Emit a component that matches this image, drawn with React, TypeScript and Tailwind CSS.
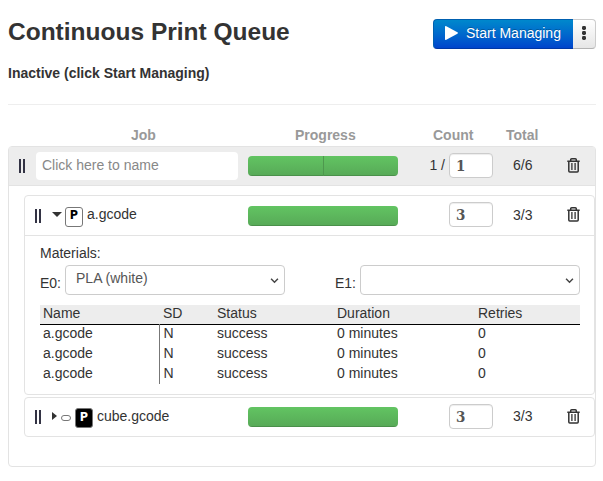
import React from "react";

function Handle() {
  return (
    <div className="flex h-[14px] w-[6px] shrink-0 justify-between">
      <span className="w-[2px] bg-[#333344]" />
      <span className="w-[2px] bg-[#333344]" />
    </div>
  );
}

function Trash() {
  return (
    <svg className="mb-[2px] block h-[15px] w-[13px] shrink-0" viewBox="0 0 13 15" fill="none" stroke="#333" strokeWidth="1.5">
      <path d="M.3 3.2H12.7M3.7 3V1.8Q3.7.8 4.7.8H8.3Q9.3.8 9.3 1.8V3M1.8 3.2V13Q1.8 14 2.8 14H10.2Q11.2 14 11.2 13V3.2" />
      <path d="M4.9 5V12M8.1 5V12" strokeWidth="1.3" />
    </svg>
  );
}

function Bar({ split = false }: { split?: boolean }) {
  return (
    <div className="flex h-5 w-[150px] shrink-0 overflow-hidden rounded-[4px]">
      <div className="flex-1 bg-gradient-to-b from-[#62c462] to-[#57a957] shadow-[inset_0_-1px_0_rgba(0,0,0,0.15)]" />
      {split && (
        <div className="w-[75px] border-l border-[#4e984e] bg-gradient-to-b from-[#62c462] to-[#57a957] shadow-[inset_0_-1px_0_rgba(0,0,0,0.15)]" />
      )}
    </div>
  );
}

function Stats({ prefix, count, total, split }: { prefix?: string; count: string; total: string; split?: boolean }) {
  return (
    <>
      <Bar split={split} />
      <div className="mb-[2px] w-[51px] pr-[4px] text-right">{prefix}</div>
      <div className="mb-[2px] h-[25px] w-[44px] shrink-0 rounded-[4px] border border-[#ccc] bg-white pl-[6px] font-['DejaVu_Serif_Condensed','DejaVu_Serif',serif] text-[15px] leading-[24px] font-bold text-[#555] shadow-[inset_0_1px_1px_rgba(0,0,0,0.075)]">
        {count}
      </div>
      <div className="mb-[2px] ml-5 w-[54px] shrink-0">{total}</div>
      <Trash />
    </>
  );
}

function Badge({ dark = false }: { dark?: boolean }) {
  return (
    <span
      className={
        dark
          ? "mt-px h-5 w-[18px] shrink-0 rounded-[3px] border border-[#777] bg-black text-center font-['DejaVu_Sans_Condensed','DejaVu_Sans',sans-serif] text-[12.5px] leading-[15px] font-bold text-white"
          : "mt-[3px] h-5 w-[18px] shrink-0 rounded-[3px] border border-[#777] bg-white text-center font-['DejaVu_Sans_Condensed','DejaVu_Sans',sans-serif] text-[12.5px] leading-[13px] font-bold text-black"
      }
    >
      P
    </span>
  );
}

function Select({ label, value }: { label: string; value: string }) {
  return (
    <div className="flex w-[245px] justify-end">
      <span className="mt-2 mr-1">{label}</span>
      <div className="flex h-[30px] w-[220px] justify-between rounded-[4px] border border-[#ccc] bg-white pl-[10px] text-[#555]">
        <span className="mt-[2px]">{value}</span>
        <svg className="mt-3 mr-[5px] h-[6px] w-[9px]" viewBox="0 0 10 7" fill="none" stroke="#444" strokeWidth="1.7">
          <path d="M1 1L5 5L9 1" />
        </svg>
      </div>
    </div>
  );
}

export default function App() {
  return (
    <div className="h-[481px] w-[603px] bg-white pt-[17px] pl-2 font-['Liberation_Sans',Arial,sans-serif] text-[14px] leading-5 text-[#333]">
      <div className="flex h-[46px] w-[588px] items-start justify-between">
        <h1 className="text-[24.5px] leading-[30px] font-bold">Continuous Print Queue</h1>
        <div className="mt-[2px] flex h-[30px] w-[163px]">
          <button className="flex w-[140px] items-center rounded-l-[4px] border border-r-0 border-[#0060b0] border-b-[#0037a4] bg-gradient-to-b from-[#0088cc] to-[#0044cc] pb-[2px] pl-[11px] text-white [text-shadow:0_-1px_0_rgba(0,0,0,0.25)]">
            <svg className="mr-2 h-[14px] w-[13px]" viewBox="0 0 13 14" fill="white">
              <path d="M0 1Q0-.4 1.3.3L12.4 6.3Q13.5 7 12.4 7.7L1.3 13.7Q0 14.4 0 13Z" />
            </svg>
            Start Managing
          </button>
          <button className="flex w-[23px] items-center justify-center rounded-r-[4px] border border-l-0 border-[#ccc] border-b-[#b3b3b3] bg-gradient-to-b from-white to-[#e6e6e6] pb-[2px]">
            <svg className="h-[14px] w-[4px]" viewBox="0 0 4 14" fill="#333">
              <rect y="0" width="4" height="4" rx="1.4" />
              <rect y="5" width="4" height="4" rx="1.4" />
              <rect y="10" width="4" height="4" rx="1.4" />
            </svg>
          </button>
        </div>
      </div>
      <div className="h-[42px] w-[588px] border-b border-[#eee] font-bold">Inactive (click Start Managing)</div>
      <div className="flex h-[41px] pt-5 font-bold text-[#999]">
        <span className="ml-[123px] w-[164px]">Job</span>
        <span className="w-[138px]">Progress</span>
        <span className="w-[73px]">Count</span>
        <span>Total</span>
      </div>
      <main className="h-[321px] w-[588px] rounded-[4px] border border-[#e3e3e3]">
        <div className="flex h-[39px] items-center border-b border-[#e3e3e3] bg-[#ededed] pl-[10.4px]">
          <Handle />
          <div className="mr-[10px] ml-[10.6px] h-7 w-[202px] rounded-[4px] bg-white pl-[6px] leading-[26px] text-[#888]">
            Click here to name
          </div>
          <Stats prefix="1 /" count="1" total="6/6" split />
        </div>
        <section className="mt-[9px] ml-[15px] h-[200px] rounded-[4px] border border-[#e3e3e3]">
          <div className="flex h-10 items-center border-b border-[#e3e3e3] pl-[10.4px]">
            <Handle />
            <div className="ml-[10.6px] flex w-[196px] items-center">
              <span className="mr-[3px] mb-[2px] h-0 w-0 border-x-[5px] border-t-[5px] border-x-transparent border-t-[#333]" />
              <Badge />
              <span className="mb-[3px] ml-[4px]">a.gcode</span>
            </div>
            <Stats count="3" total="3/3" />
          </div>
          <div className="w-[555px] pt-[7px] pl-[15px]">
            <div>Materials:</div>
            <div className="mt-[2px] flex gap-[50px]">
              <Select label="E0:" value="PLA (white)" />
              <Select label="E1:" value="" />
            </div>
            <table className="mt-[10px] w-[540px] table-fixed border-collapse text-left">
              <colgroup>
                <col className="w-[119px]" />
                <col className="w-[55px]" />
                <col className="w-[120px]" />
                <col className="w-[141px]" />
                <col />
              </colgroup>
              <thead className="border-b border-black bg-[#ededed]">
                <tr className="h-[19px] leading-[16px]">
                  {["Name", "SD", "Status", "Duration", "Retries"].map((name) => (
                    <th key={name} className="p-0 pb-[2px] pl-[3px] font-normal nth-2:pl-[4px]">{name}</th>
                  ))}
                </tr>
              </thead>
              <tbody>
                {[0, 1, 2].map((run) => (
                  <tr key={run} className="h-5 leading-[16px]">
                    <td className="border-r border-[#777] p-0 pb-[2px] pl-[3px]">a.gcode</td>
                    <td className="p-0 pb-[2px] pl-[4px]">N</td>
                    <td className="p-0 pb-[2px] pl-[3px]">success</td>
                    <td className="p-0 pb-[2px] pl-[3px]">0 minutes</td>
                    <td className="p-0 pb-[2px] pl-[3px]">0</td>
                  </tr>
                ))}
              </tbody>
            </table>
          </div>
        </section>
        <section className="mt-[2px] ml-[15px] flex h-10 items-center rounded-[4px] border border-[#e3e3e3] pl-[10.4px]">
          <Handle />
          <div className="ml-[10.6px] flex w-[196px] items-center">
            <span className="mr-[4px] mb-[3px] h-0 w-0 border-y-[4.5px] border-l-[5px] border-y-transparent border-l-[#333]" />
            <span className="mt-[2px] mr-[4px] h-[6px] w-[10px] rounded-full border border-[#777]" />
            <Badge dark />
            <span className="mb-[2px] ml-[4px]">cube.gcode</span>
          </div>
          <Stats count="3" total="3/3" />
        </section>
      </main>
    </div>
  );
}
